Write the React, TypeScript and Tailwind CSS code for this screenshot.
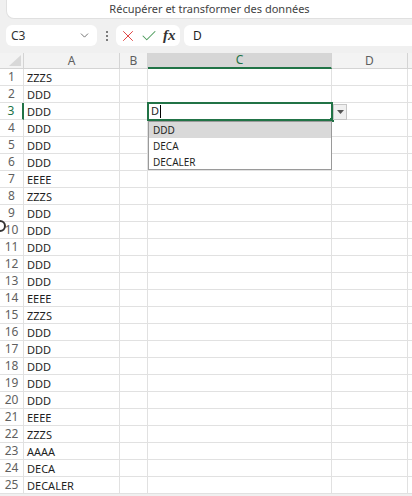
import { ChevronDown, X, Check } from "lucide-react";

const values = [
  "ZZZS", "DDD", "DDD", "DDD", "DDD", "DDD", "EEEE", "ZZZS", "DDD", "DDD",
  "DDD", "DDD", "DDD", "EEEE", "ZZZS", "DDD", "DDD", "DDD", "DDD", "DDD",
  "EEEE", "ZZZS", "AAAA", "DECA", "DECALER",
];

const font = { fontFamily: '"Noto Sans", "Open Sans", sans-serif' };

export default function App() {
  return (
    <div className="relative w-[412px] h-[496px] overflow-hidden bg-[#f0f0f0] text-[#1f1f1f]" style={font}>
      {/* Ribbon strip */}
      <div className="ml-[6px] h-[19px] bg-white border-b border-l border-[#e0e0e0] rounded-bl-lg flex items-center justify-center text-[11px] text-[#424242]">
        Récupérer et transformer des données
      </div>

      {/* Formula bar */}
      <div className="flex items-center h-[21px] mt-[6px] pl-[6px]">
        <div className="w-[91px] h-full bg-white rounded-md flex items-center justify-between pl-[5px] pr-[6px] text-[12px] text-[#333]">
          <span>C3</span>
          <ChevronDown size={13} strokeWidth={1.5} className="text-[#555]" />
        </div>
        <div className="w-[19px] flex flex-col items-center gap-[2px]">
          <span className="w-[2px] h-[2px] bg-[#555] rounded-full" />
          <span className="w-[2px] h-[2px] bg-[#555] rounded-full" />
          <span className="w-[2px] h-[2px] bg-[#555] rounded-full" />
        </div>
        <div className="w-[64px] h-full bg-white rounded-md flex items-center pl-[3px] gap-[3px]">
          <X size={18} strokeWidth={1.3} className="text-[#e0403f]" />
          <Check size={18} strokeWidth={1.4} className="text-[#4a9a5a]" />
          <span className="ml-[2px] text-[15px] italic font-semibold text-[#333] leading-none" style={{ fontFamily: '"Liberation Serif", serif' }}>fx</span>
        </div>
        <div className="ml-[4px] flex-1 h-full bg-white rounded-l-md flex items-center pl-[9px] text-[12px]">D</div>
      </div>

      {/* Grid */}
      <div className="mt-[7px] bg-white">
        <div className="grid grid-cols-[24px_96px_28px_184px_76px_1fr] h-[16px] bg-[#f3f3f3] text-[12px] text-[#5f5f5f] leading-none">
          <div className="relative border-r border-b border-[#d4d4d4]">
            <svg className="absolute right-[2px] bottom-[2px]" width="12" height="11" viewBox="0 0 12 11">
              <polygon points="12,0 12,11 0,11" fill="#d8d8d8" />
            </svg>
          </div>
          <div className="flex items-center justify-center border-r border-b border-[#d4d4d4]">A</div>
          <div className="flex items-center justify-center border-r border-b border-[#d4d4d4]">B</div>
          <div className="flex items-center justify-center bg-[#d6d6d6] border-r border-[#d4d4d4] border-b-2 border-b-[#217346] text-[#217346]">C</div>
          <div className="flex items-center justify-center border-r border-b border-[#d4d4d4]">D</div>
          <div className="border-b border-[#d4d4d4]" />
        </div>
        {values.map((v, i) => {
          const sel = i === 2;
          return (
            <div key={i} className="grid grid-cols-[24px_96px_28px_184px_76px_1fr] h-[17px] leading-none">
              <div className={`flex items-center justify-center text-[12px] border-b border-[#e1e1e1] ${sel ? "border-r-2 border-r-[#217346] text-[#217346]" : "border-r border-[#d4d4d4] text-[#5f5f5f]"}`}>
                {i + 1}
              </div>
              <div className="flex items-center pl-[3px] text-[11px] border-r border-b border-[#e1e1e1]">{v}</div>
              <div className="border-r border-b border-[#e1e1e1]" />
              <div className="border-r border-b border-[#e1e1e1]" />
              <div className="border-r border-b border-[#e1e1e1]" />
              <div className="border-b border-[#e1e1e1]" />
            </div>
          );
        })}
      </div>

      {/* Active cell editor */}
      <div className="absolute left-[147px] top-[102px] w-[186px] h-[19px] border-2 border-[#217346] bg-white flex items-center pl-[2px] text-[11px]">
        <span>D</span>
        <span className="w-[1px] h-[13px] bg-black ml-[1px]" />
        <span className="absolute -right-[3px] -bottom-[3px] w-[4px] h-[4px] bg-[#217346]" />
      </div>
      <div className="absolute left-[333px] top-[104px] w-[14px] h-[16px] bg-[#f0f0f0] border border-[#c6c6c6] flex items-center justify-center">
        <svg width="7" height="4" viewBox="0 0 7 4"><polygon points="0,0 7,0 3.5,4" fill="#555" /></svg>
      </div>

      {/* Autocomplete list */}
      <div className="absolute left-[148px] top-[121px] w-[184px] h-[49px] bg-white border border-[#9a9a9a] text-[10px] leading-none">
        <div className="h-[16px] bg-[#d9d9d9] flex items-center pl-[4px]">DDD</div>
        <div className="h-[16px] flex items-center pl-[4px]">DECA</div>
        <div className="h-[16px] flex items-center pl-[4px]">DECALER</div>
      </div>

      {/* Busy cursor fragment */}
      <svg className="absolute left-0 top-[219px]" width="8" height="14" viewBox="0 0 8 14">
        <circle cx="0" cy="7" r="5" fill="none" stroke="#333" strokeWidth="2" />
      </svg>
    </div>
  );
}
